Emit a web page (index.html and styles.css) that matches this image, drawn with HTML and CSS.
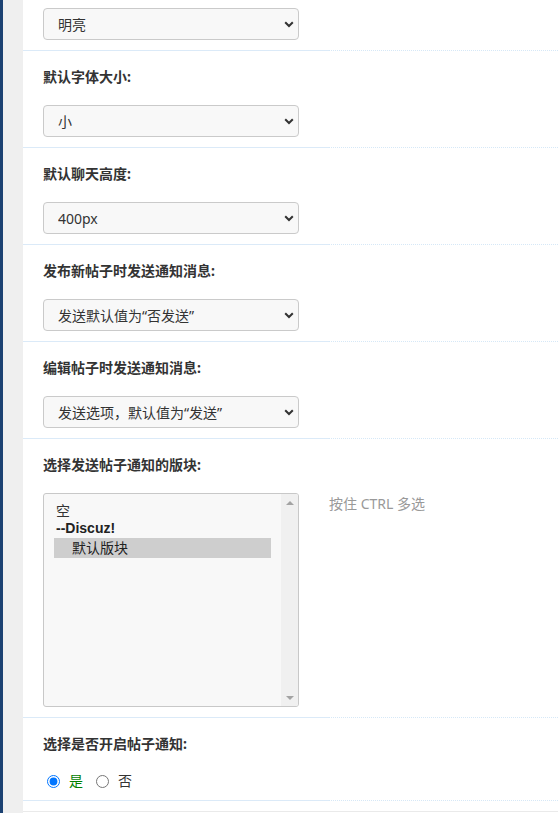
FILE: index.html
```html
<!DOCTYPE html>
<html lang="zh-CN">
<head>
<meta charset="utf-8">
<title>帖子通知设置</title>
<link rel="stylesheet" href="styles.css">
</head>
<body>
<div class="frame">
  <div class="edge"></div>
  <div class="gutter"></div>
  <main class="settings">

    <section class="field field-first">
      <div class="control-row">
        <div class="control">
          <div class="select-wrap">
            <select class="select"><option>明亮</option></select>
            <svg class="chevron" width="10" height="7" viewBox="0 0 10 7"><path d="M1.2 1.2 L5 5 L8.8 1.2" fill="none" stroke="#333" stroke-width="2"/></svg>
          </div>
        </div>
        <div class="tip"></div>
      </div>
    </section>

    <section class="field">
      <h3 class="label">默认字体大小:</h3>
      <div class="control-row">
        <div class="control">
          <div class="select-wrap">
            <select class="select"><option>小</option></select>
            <svg class="chevron" width="10" height="7" viewBox="0 0 10 7"><path d="M1.2 1.2 L5 5 L8.8 1.2" fill="none" stroke="#333" stroke-width="2"/></svg>
          </div>
        </div>
        <div class="tip"></div>
      </div>
    </section>

    <section class="field">
      <h3 class="label">默认聊天高度:</h3>
      <div class="control-row">
        <div class="control">
          <div class="select-wrap">
            <select class="select"><option>400px</option></select>
            <svg class="chevron" width="10" height="7" viewBox="0 0 10 7"><path d="M1.2 1.2 L5 5 L8.8 1.2" fill="none" stroke="#333" stroke-width="2"/></svg>
          </div>
        </div>
        <div class="tip"></div>
      </div>
    </section>

    <section class="field">
      <h3 class="label">发布新帖子时发送通知消息:</h3>
      <div class="control-row">
        <div class="control">
          <div class="select-wrap">
            <select class="select"><option>发送默认值为“否发送”</option></select>
            <svg class="chevron" width="10" height="7" viewBox="0 0 10 7"><path d="M1.2 1.2 L5 5 L8.8 1.2" fill="none" stroke="#333" stroke-width="2"/></svg>
          </div>
        </div>
        <div class="tip"></div>
      </div>
    </section>

    <section class="field">
      <h3 class="label">编辑帖子时发送通知消息:</h3>
      <div class="control-row">
        <div class="control">
          <div class="select-wrap">
            <select class="select"><option>发送选项，默认值为“发送”</option></select>
            <svg class="chevron" width="10" height="7" viewBox="0 0 10 7"><path d="M1.2 1.2 L5 5 L8.8 1.2" fill="none" stroke="#333" stroke-width="2"/></svg>
          </div>
        </div>
        <div class="tip"></div>
      </div>
    </section>

    <section class="field">
      <h3 class="label">选择发送帖子通知的版块:</h3>
      <div class="control-row">
        <div class="control">
          <div class="listbox" role="listbox" aria-multiselectable="true">
            <div class="options">
              <div class="opt opt-empty" role="option">空</div>
              <div class="opt-group">--Discuz!</div>
              <div class="opt opt-child opt-selected" role="option" aria-selected="true">默认版块</div>
            </div>
            <div class="scrollbar">
              <span class="arrow arrow-up"></span>
              <span class="arrow arrow-down"></span>
            </div>
          </div>
        </div>
        <div class="tip tip-text">按住 CTRL 多选</div>
      </div>
    </section>

    <section class="field">
      <h3 class="label">选择是否开启帖子通知:</h3>
      <div class="control-row">
        <div class="control control-radio">
          <label class="radio radio-on"><input type="radio" name="notify" checked><span>是</span></label>
          <label class="radio"><input type="radio" name="notify"><span>否</span></label>
        </div>
        <div class="tip"></div>
      </div>
    </section>

    <div class="tail"></div>
  </main>
</div>
</body>
</html>
```

FILE: styles.css
```css
* {
  box-sizing: border-box;
}

html, body {
  margin: 0;
  padding: 0;
  height: 100%;
  background: #fff;
}

body {
  font-family: "Noto Sans", "Noto Sans CJK SC", sans-serif;
  font-size: 14px;
  color: #333;
  overflow: hidden;
}

.frame {
  display: flex;
  min-height: 100%;
}

.edge {
  width: 3px;
  flex: none;
  background: #1c4272;
}

.gutter {
  width: 20px;
  flex: none;
  background: #efefef;
}

.settings {
  flex: 1;
  background: #fff;
}

/* one setting: bold caption, then the control and its hint */
.label {
  margin: 0;
  padding: 16px 0 0 20px;
  font-size: 14px;
  line-height: 20px;
  font-weight: bold;
  color: #333;
}

.control-row {
  display: grid;
  grid-template-columns: 306px 1fr;
}

.control {
  padding: 18px 0 10px 20px;
  border-bottom: 1px solid #dbeaf8;
}

.field-first .control {
  padding-top: 8px;
}

.tip {
  border-bottom: 1px dotted #d6e8f7;
  padding-top: 19px;
}

.tip-text {
  color: #999;
  font-size: 14px;
  line-height: 20px;
}

/* dropdowns */
.select-wrap {
  position: relative;
  width: 256px;
}

.select {
  display: block;
  width: 256px;
  height: 32px;
  margin: 0;
  padding: 0 28px 0 14px;
  border: 1px solid #cacaca;
  border-radius: 4px;
  background: #f8f8f8;
  font-family: inherit;
  font-size: 14px;
  color: #333;
  -webkit-appearance: none;
  appearance: none;
  outline: none;
}

.chevron {
  position: absolute;
  right: 5px;
  top: 13px;
  pointer-events: none;
}

/* multi-select forum list */
.listbox {
  display: flex;
  width: 256px;
  height: 214px;
  border: 1px solid #c8c8c8;
  border-radius: 3px;
  background: #f8f8f8;
  overflow: hidden;
}

.options {
  flex: 1;
  padding: 8px 10px 0 10px;
}

.opt,
.opt-group {
  padding-left: 2px;
  white-space: nowrap;
}

.opt-empty {
  height: 17px;
  line-height: 17px;
}

.opt-group {
  height: 18px;
  line-height: 18px;
  font-weight: bold;
  color: #222;
  font-family: "Liberation Sans", "Noto Sans CJK SC", sans-serif;
}

.opt-child {
  margin-top: 1px;
  height: 20px;
  line-height: 20px;
  padding-left: 18px;
}

.opt-selected {
  background: #cecece;
  color: #222;
}

.scrollbar {
  position: relative;
  width: 17px;
  flex: none;
  background: #f0f0f0;
}

.arrow {
  position: absolute;
  left: 5px;
  width: 0;
  height: 0;
  border-left: 4px solid transparent;
  border-right: 4px solid transparent;
}

.arrow-up {
  top: 7px;
  border-bottom: 4px solid #a3a3a3;
}

.arrow-down {
  bottom: 6px;
  border-top: 4px solid #a3a3a3;
}

/* yes / no switch */
.control-radio {
  display: flex;
  align-items: center;
  height: 20px;
  box-sizing: content-box;
  padding-top: 17px;
  padding-bottom: 9px;
  padding-left: 24px;
}

.radio {
  display: flex;
  align-items: center;
  line-height: 20px;
  margin-right: 13px;
}

.radio input {
  width: 13px;
  height: 13px;
  margin: 0 9px 0 0;
}

.radio-on span {
  color: #008000;
}

.tail {
  height: 11px;
  border-bottom: 1px solid #eaeaea;
}
```
